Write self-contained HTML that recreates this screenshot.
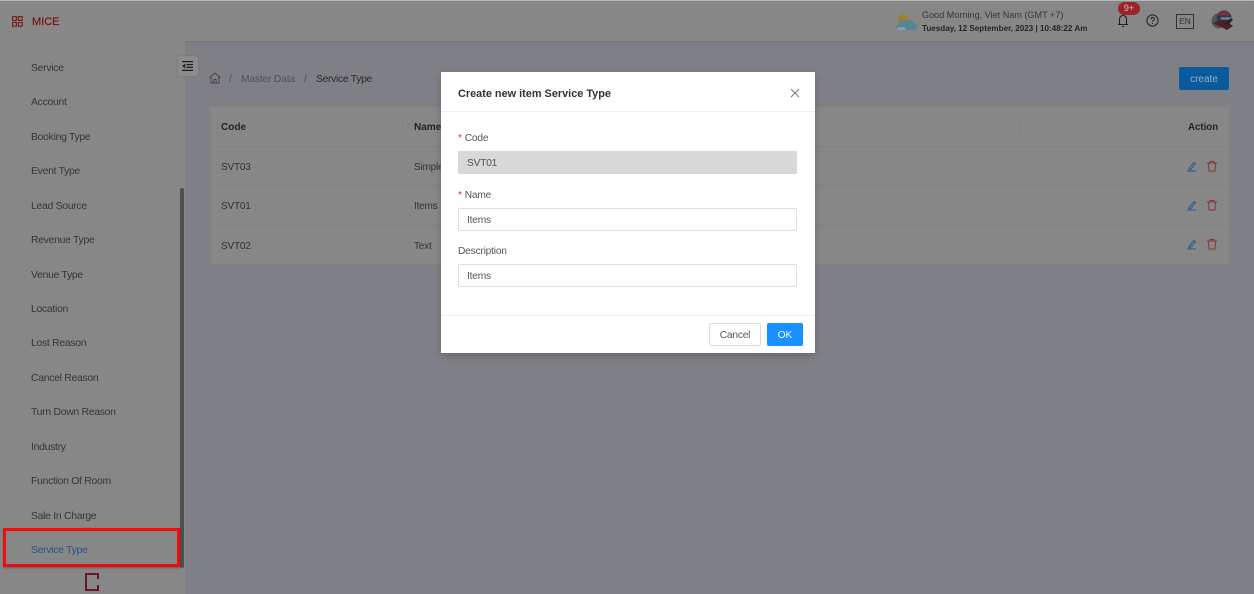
<!DOCTYPE html>
<html><head><meta charset="utf-8"><title>Service Type</title>
<style>
*{box-sizing:border-box}
html,body{margin:0;padding:0;width:1254px;height:594px;overflow:hidden;background:#7f8086;font-family:"Liberation Sans",sans-serif;font-size:10px;color:#2c2c2c}
#r{position:absolute;left:0;top:0;width:1254px;height:594px;filter:blur(.3px)}
.a{position:absolute;white-space:nowrap}
.m{left:31px;font-size:10.4px;letter-spacing:-.28px;color:#363636;line-height:12px}
.t{font-size:10px;letter-spacing:-.2px;color:#333;line-height:12px}
.b{font-weight:bold;color:#242424;font-size:10px;line-height:12px}
.inp{position:absolute;left:17px;width:339px;height:23px;border:1px solid #e0e0e0;background:#fff;border-radius:1px;padding-left:8px;font-size:10.2px;letter-spacing:-.2px;line-height:23px;color:#555}
.lab{position:absolute;left:17px;font-size:10.2px;letter-spacing:-.2px;line-height:12px;color:#555}
.lab i{color:#f5222d;font-style:normal;margin-right:3px}
</style></head><body><div id="r">
<div class="a" style="left:0;top:0;width:1254px;height:1px;background:#bdbdbd"></div>
<div class="a" style="left:0;top:1px;width:1254px;height:40px;background:#878787;box-shadow:0 1px 4px rgba(0,0,0,.12)"></div>
<svg class="a" style="left:12px;top:16px" width="11" height="11" viewBox="0 0 11 11" fill="none" stroke="#7c1818" stroke-width="1.1"><rect x=".6" y=".6" width="3.8" height="3.8"/><rect x="6.4" y=".6" width="3.8" height="3.8"/><rect x=".6" y="6.4" width="3.8" height="3.8"/><rect x="6.4" y="6.4" width="3.8" height="3.8"/></svg>
<div class="a" style="left:32px;top:15px;font-size:11px;line-height:14px;color:#7c1414;-webkit-text-stroke:.2px #7c1414">MICE</div>

<svg class="a" style="left:895px;top:13px" width="23" height="19" viewBox="0 0 23 19"><circle cx="8" cy="7" r="5.5" fill="#97803c"/><path d="M4 17c-3 0-4-4-1-5 1-4 6-6 9-3 1-3 6-3 7 1 2 1 4 3 3 5-.5 1.500-2 2-3 2z" fill="#558494"/><path d="M1 17h11l-3-3H3z" fill="#8b9ea3"/></svg>
<div class="a" style="left:922px;top:9px;font-size:9.1px;line-height:12px;color:#383838">Good Morning, Viet Nam (GMT +7)</div>
<div class="a" style="left:922px;top:23px;font-size:8.1px;line-height:12px;color:#262626;font-weight:bold">Tuesday, 12 September, 2023 | 10:48:22 Am</div>

<svg class="a" style="left:1117px;top:14px" width="12" height="14" viewBox="0 0 12 14" fill="none" stroke="#222" stroke-width="1.1"><path d="M2.500 10.500V5a3.500 3.500 0 0 1 7 0v5.500M1 10.500h10M5 12.500h2"/></svg>
<div class="a" style="left:1118px;top:2px;width:22px;height:13px;border-radius:7px;background:#9c2529;color:#dcbcbc;font-size:9px;line-height:13px;text-align:center">9+</div>
<svg class="a" style="left:1146px;top:14px" width="13" height="13" viewBox="0 0 13 13" fill="none" stroke="#222" stroke-width="1"><circle cx="6.500" cy="6.500" r="5.600"/><path d="M4.800 5.200c0-2.300 3.500-2.300 3.500-.2 0 1.300-1.800 1.300-1.800 2.800M6.500 9v1"/></svg>
<div class="a" style="left:1176px;top:14px;width:18px;height:15px;border:1px solid #333;font-size:8.500px;line-height:13px;text-align:center;color:#333">EN</div>
<svg class="a" style="left:1211px;top:9px" width="23" height="22" viewBox="0 0 23 22"><ellipse cx="7.500" cy="12" rx="7" ry="7.500" fill="#55505a"/><circle cx="13" cy="9" r="7.500" fill="#2c3c58"/><path d="M7 3.500l10-1 2 4H6z" fill="#7d3038"/><path d="M2 14l14 7 6-4-9-7z" fill="#4f1f28"/><path d="M10 8.500h11v2H10z" fill="#8a8a90"/><path d="M14 14l6-5 2 1.500-5 6z" fill="#1d2536"/></svg>

<div class="a" style="left:0;top:41px;width:185px;height:553px;background:#878787"></div>
<div class="a" style="left:180px;top:188px;width:4px;height:380px;background:#4f4f4f;border-radius:2px"></div>
<div class="a" style="left:178px;top:56px;width:20px;height:20px;background:#8b8b8b;border-radius:2px;box-shadow:0 0 2px rgba(0,0,0,.15)"></div>
<svg class="a" style="left:182px;top:61px" width="11" height="10" viewBox="0 0 11 10" stroke="#222" stroke-width="1.2" fill="#222"><path d="M0 .6h11M4.500 3.600h6.500M4.500 6.400h6.500M0 9.400h11" fill="none"/><path d="M3.300 2.800v4.400L0 5z" stroke="none"/></svg>

<div class="a m" style="top:63px">Service</div>
<div class="a m" style="top:97px">Account</div>
<div class="a m" style="top:132px">Booking Type</div>
<div class="a m" style="top:166px">Event Type</div>
<div class="a m" style="top:201px">Lead Source</div>
<div class="a m" style="top:235px">Revenue Type</div>
<div class="a m" style="top:270px">Venue Type</div>
<div class="a m" style="top:304px">Location</div>
<div class="a m" style="top:338px">Lost Reason</div>
<div class="a m" style="top:373px">Cancel Reason</div>
<div class="a m" style="top:407px">Turn Down Reason</div>
<div class="a m" style="top:442px">Industry</div>
<div class="a m" style="top:476px">Function Of Room</div>
<div class="a m" style="top:511px">Sale In Charge</div>
<div class="a m" style="top:545px;color:#2a5288">Service Type</div>
<div class="a" style="left:3px;top:528px;width:177px;height:39px;border:3px solid #ee0e0e;box-shadow:0 1px 2px rgba(0,0,0,.3)"></div>
<div class="a" style="left:85px;top:573px;width:14px;height:18px;border:2.500px solid #6e1520;border-right-style:dashed"></div>

<svg class="a" style="left:209px;top:72px" width="12" height="12" viewBox="0 0 12 12" fill="none" stroke="#444" stroke-width=".9"><path d="M.5 6L6 1l5.500 5M2 5v6h8V5M4.800 11V7.500h2.400V11"/></svg>
<div class="a" style="left:229px;top:74px;font-size:10px;line-height:12px;color:#505050">/</div>
<div class="a" style="left:241px;top:74px;font-size:10.3px;letter-spacing:-.2px;line-height:12px;color:#505156">Master Data</div>
<div class="a" style="left:304px;top:74px;font-size:10px;line-height:12px;color:#505050">/</div>
<div class="a" style="left:316px;top:74px;font-size:10.3px;letter-spacing:-.28px;line-height:12px;color:#2a2a2a">Service Type</div>
<div class="a" style="left:1179px;top:67px;width:50px;height:23px;background:#0a5a9e;border-radius:2px;color:#94b0ca;font-size:10px;line-height:25px;text-align:center">create</div>

<div class="a" style="left:210px;top:107px;width:1019px;height:157px;background:#878787"></div>
<div class="a" style="left:210px;top:146px;width:1019px;height:1px;background:#828282"></div>
<div class="a" style="left:210px;top:185px;width:1019px;height:1px;background:#828282"></div>
<div class="a" style="left:210px;top:225px;width:1019px;height:1px;background:#828282"></div>
<div class="a" style="left:402px;top:118px;width:1px;height:16px;background:#818181"></div>
<div class="a" style="left:1020px;top:118px;width:1px;height:16px;background:#818181"></div>
<div class="a b" style="left:221px;top:122px">Code</div>
<div class="a b" style="left:414px;top:122px">Name</div>
<div class="a b" style="left:1188px;top:122px;font-size:9.700px">Action</div>
<div class="a t" style="left:221px;top:162px">SVT03</div>
<div class="a t" style="left:414px;top:162px">Simple</div>
<div class="a t" style="left:221px;top:201px">SVT01</div>
<div class="a t" style="left:414px;top:201px">Items</div>
<div class="a t" style="left:221px;top:241px">SVT02</div>
<div class="a t" style="left:414px;top:241px">Text</div>

<svg class="a" style="left:1186px;top:160px" width="34" height="12" viewBox="0 0 34 12" fill="none"><path d="M1 11h9M3 8.500l5-6 1.500 1.300-5 6H3z" stroke="#2a5a8c" stroke-width="1"/><path d="M21 3h10M24 3V1.500h4V3M22.500 3l.5 8h6l.5-8" stroke="#86343a" stroke-width="1"/></svg>
<svg class="a" style="left:1186px;top:199px" width="34" height="12" viewBox="0 0 34 12" fill="none"><path d="M1 11h9M3 8.500l5-6 1.500 1.300-5 6H3z" stroke="#2a5a8c" stroke-width="1"/><path d="M21 3h10M24 3V1.500h4V3M22.500 3l.5 8h6l.5-8" stroke="#86343a" stroke-width="1"/></svg>
<svg class="a" style="left:1186px;top:238px" width="34" height="12" viewBox="0 0 34 12" fill="none"><path d="M1 11h9M3 8.500l5-6 1.500 1.300-5 6H3z" stroke="#2a5a8c" stroke-width="1"/><path d="M21 3h10M24 3V1.500h4V3M22.500 3l.5 8h6l.5-8" stroke="#86343a" stroke-width="1"/></svg>

<div class="a" style="left:441px;top:72px;width:374px;height:281px;background:#fff;box-shadow:0 3px 8px rgba(0,0,0,.2)">
  <div class="a" style="left:17px;top:15px;font-size:10.900px;line-height:14px;color:#333;font-weight:bold">Create new item Service Type</div>
  <svg class="a" style="left:349px;top:16px" width="10" height="10" viewBox="0 0 10 10" stroke="#777" stroke-width="1"><path d="M1 1l8 8M9 1l-8 8"/></svg>
  <div class="a" style="left:0;top:39px;width:374px;height:1px;background:#efefef"></div>
  <div class="lab" style="top:61px"><i>*</i>Code</div>
  <div class="inp" style="top:79px;background:#d8d8d8;border-color:#d8d8d8;line-height:24px">SVT01</div>
  <div class="lab" style="top:118px"><i>*</i>Name</div>
  <div class="inp" style="top:136px">Items</div>
  <div class="lab" style="top:174px">Description</div>
  <div class="inp" style="top:192px">Items</div>
  <div class="a" style="left:0;top:243px;width:374px;height:1px;background:#efefef"></div>
  <div class="a" style="left:268px;top:251px;width:52px;height:23px;border:1px solid #dcdcdc;border-radius:2px;font-size:10.2px;letter-spacing:-.2px;line-height:24px;text-align:center;color:#555;background:#fff">Cancel</div>
  <div class="a" style="left:326px;top:251px;width:36px;height:23px;background:#1890ff;border-radius:2px;font-size:10px;line-height:25px;text-align:center;color:#fff">OK</div>
</div>
</div></body></html>
